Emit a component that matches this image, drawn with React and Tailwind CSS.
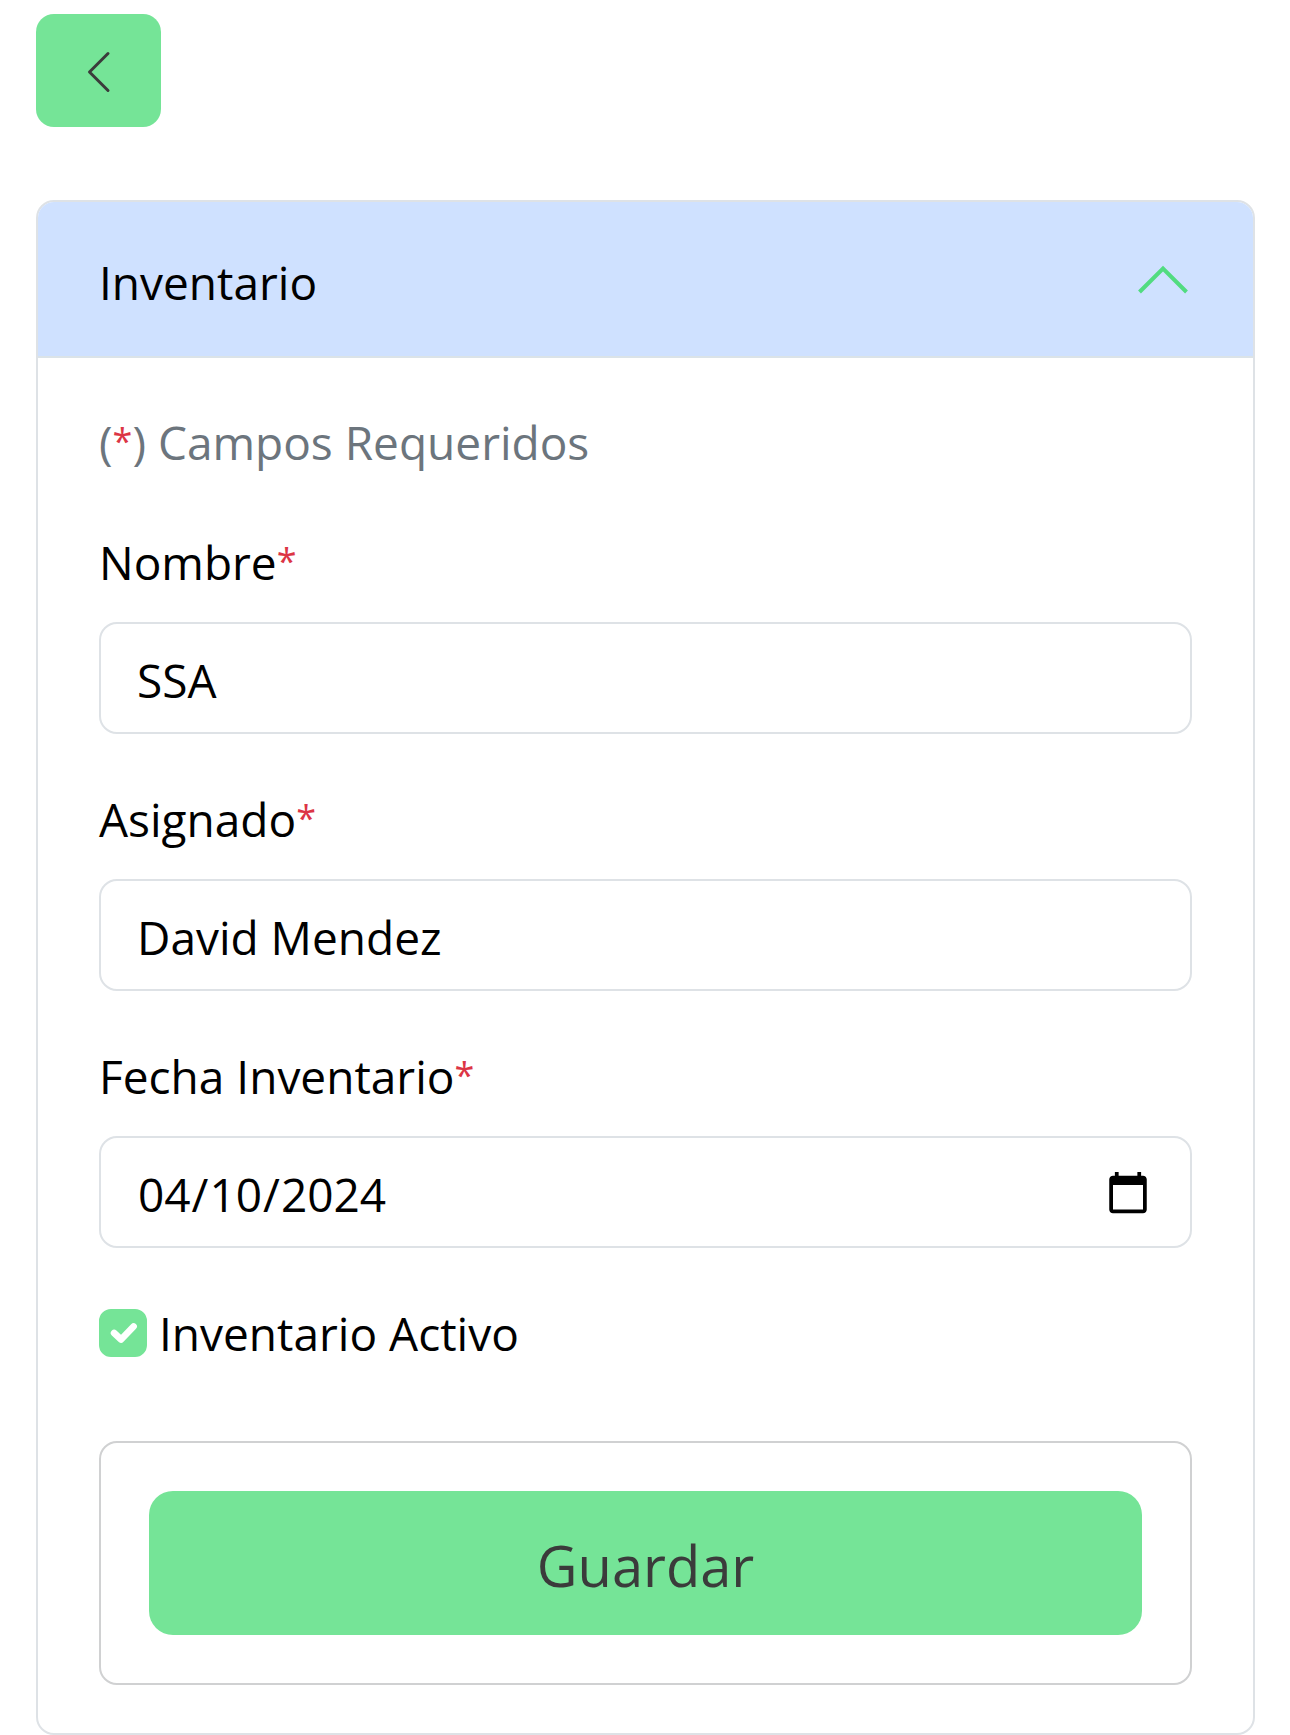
import { useState } from "react";

function Required() {
  return <span className="align-[6px] text-[36px] leading-none text-[#dc3545]">*</span>;
}

function Field({ id, label, children }) {
  return (
    <div className="mb-[49px]">
      <label htmlFor={id} className="mb-6 block">
        {label}
        <Required />
      </label>
      {children}
    </div>
  );
}

const inputClass =
  "block h-28 w-full rounded-[18px] border-2 border-[#dee2e6] bg-white px-9 pt-1 text-black outline-none focus:border-[#74e597] [&::-webkit-calendar-picker-indicator]:size-12";

export default function App() {
  const [open, setOpen] = useState(true);
  const [name, setName] = useState("SSA");
  const [assigned, setAssigned] = useState("David Mendez");
  const [date, setDate] = useState("2024-04-10");
  const [active, setActive] = useState(true);

  return (
    <main className="bg-white pt-3.5 pr-[35px] pl-9 font-['Open_Sans',sans-serif] text-[46px] leading-[72px] text-black">
      <button
        type="button"
        aria-label="Volver"
        className="flex h-[113px] w-[125px] items-center justify-center rounded-[18px] bg-[#75e497] text-[#3b3b3b]"
      >
        <svg className="size-12" viewBox="0 0 48 48" fill="none" stroke="currentColor" strokeWidth="3" strokeLinecap="round" strokeLinejoin="round">
          <path d="M33 6.500 14.500 25 33 43.500" />
        </svg>
      </button>

      <section className="mt-[73px] overflow-hidden rounded-[18px] border-2 border-[#dee2e6]">
        <h2>
          <button
            type="button"
            aria-expanded={open}
            aria-controls="inventario"
            onClick={() => setOpen(!open)}
            className="flex w-full items-center justify-between border-b-2 border-[#dbe3e8] bg-[#cfe1ff] px-[61px] pt-11 pb-[38px] text-left"
          >
            Inventario
            <svg className={open ? "size-[60px]" : "size-[60px] rotate-180"} viewBox="0 0 60 60" fill="none" stroke="#51dc80" strokeWidth="4">
              <path d="m7.500 40 23.500-23.500L54.500 40" />
            </svg>
          </button>
        </h2>

        {open && (
          <form id="inventario" className="px-[61px] py-12" onSubmit={(e) => e.preventDefault()}>
            <p className="mb-12 text-[#6c757d]">
              (<Required />) Campos Requeridos
            </p>

            <Field id="nombre" label="Nombre">
              <input id="nombre" type="text" required value={name} onChange={(e) => setName(e.target.value)} className={inputClass} />
            </Field>
            <Field id="asignado" label="Asignado">
              <input id="asignado" type="text" required value={assigned} onChange={(e) => setAssigned(e.target.value)} className={inputClass} />
            </Field>
            <Field id="fecha" label="Fecha Inventario">
              <input id="fecha" type="date" required value={date} onChange={(e) => setDate(e.target.value)} className={inputClass} />
            </Field>

            <div className="flex items-center gap-3">
              <span className="grid size-12 shrink-0">
                <input
                  id="activo"
                  type="checkbox"
                  checked={active}
                  onChange={(e) => setActive(e.target.checked)}
                  className="col-start-1 row-start-1 size-12 appearance-none rounded-xl border-2 border-[#dee2e6] bg-white checked:border-[#75e497] checked:bg-[#75e497]"
                />
                {active && (
                  <svg className="pointer-events-none col-start-1 row-start-1 size-12" viewBox="0 0 20 20" fill="none" stroke="#fff" strokeWidth="2.8" strokeLinecap="round" strokeLinejoin="round">
                    <path d="m6.300 10 2.900 2.700 5.200-5.400" />
                  </svg>
                )}
              </span>
              <label htmlFor="activo">Inventario Activo</label>
            </div>

            <div className="mt-[72px] rounded-[18px] border-2 border-[#d0d1d2] p-12">
              <button type="submit" className="h-36 w-full rounded-3xl bg-[#75e497] pt-1 text-[56px] text-[#3b3b3b]">
                Guardar
              </button>
            </div>
          </form>
        )}
      </section>
    </main>
  );
}
